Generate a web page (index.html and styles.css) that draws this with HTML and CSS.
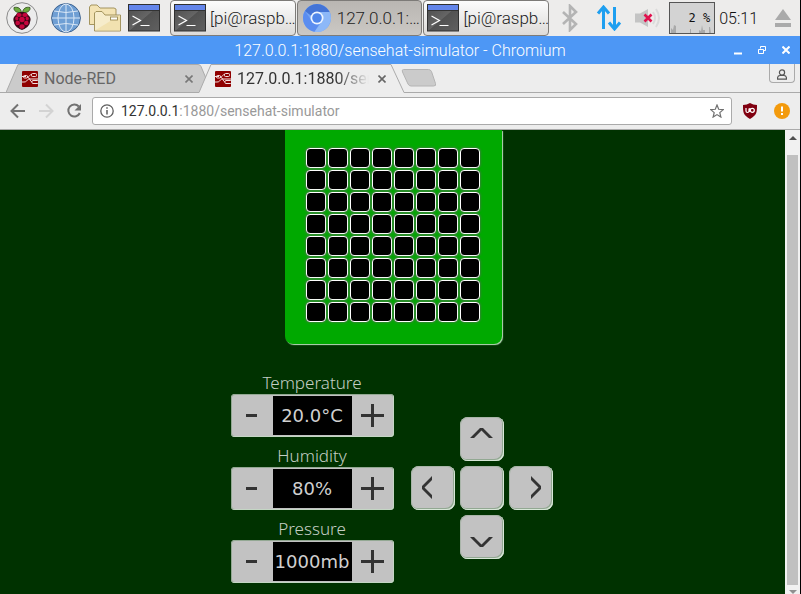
FILE: index.html
```html
<!DOCTYPE html>
<html lang="en">
<head>
<meta charset="utf-8">
<title>127.0.0.1:1880/sensehat-simulator</title>
<link rel="stylesheet" href="styles.css">
</head>
<body>
<svg class="defs" aria-hidden="true">
  <linearGradient id="term" x2="1" y2="1"><stop offset="0" stop-color="#4b4b4b"/><stop offset=".5" stop-color="#656565"/><stop offset=".52" stop-color="#525252"/><stop offset="1" stop-color="#606060"/></linearGradient>
  <symbol id="terminal" viewBox="0 0 32 28">
    <rect x=".5" y=".5" width="31" height="26.500" fill="url(#term)" stroke="#303030"/>
    <path d="M1 1h30v5H1z" fill="#6385ea"/><path d="M1 6.500h30" stroke="#333"/>
    <path d="M4.500 12l8 4.500-8 4.500M12.500 21.500h9" fill="none" stroke="#fff" stroke-width="1.200"/>
  </symbol>
  <symbol id="nodered" viewBox="0 0 16 16">
    <rect width="16" height="16" rx="1" fill="#8f0000"/>
    <g fill="none" stroke="#f3dede" stroke-width="1"><path d="M0 5.500h4M5 6c3 0 2-2.500 5-2.500M5 6c3 0 3 5 5 5M0 11h2c4 0 2-3 6-3h8"/><rect x="9.500" y="2.500" width="5" height="3" rx="1"/><rect x="10" y="9.500" width="6.500" height="3" rx="1"/><rect x="1.500" y="4.500" width="4" height="2.500" rx="1"/></g>
  </symbol>
</svg>

<header class="taskbar">
  <nav class="launchers">
    <button aria-label="Menu"><svg width="32" height="32" viewBox="0 0 32 32">
      <circle cx="16" cy="16" r="15.300" fill="#ececec" stroke="#8a8a8a"/>
      <g fill="#6cab3e" stroke="#2d4a1b" stroke-width=".8"><path d="M15.500 10.500C10 11 7.500 8.500 8 5.500c4-1 7 1 7.500 5z"/><path d="M16.500 10.500c5.500.5 8-2 7.500-5-4-1-7 1-7.500 5z"/></g>
      <path d="M16 10c4 0 5 1 6 3 3 2 3 5 2 7 0 4-5 7-8 8-3-1-8-4-8-8-1-2-1-5 2-7 1-2 2-3 6-3z" fill="#3a0715"/>
      <g fill="#c7053d"><ellipse cx="13" cy="13" rx="2.700" ry="2"/><ellipse cx="19" cy="13" rx="2.700" ry="2"/><circle cx="16" cy="17.500" r="2.700"/><ellipse cx="10.800" cy="16.500" rx="1.600" ry="2"/><ellipse cx="21.200" cy="16.500" rx="1.600" ry="2"/><circle cx="11.700" cy="21" r="2.300"/><circle cx="20.300" cy="21" r="2.300"/><ellipse cx="16" cy="24.500" rx="2.600" ry="2.300"/></g>
    </svg></button>
    <button aria-label="Web browser"><svg width="30" height="30" viewBox="0 0 30 30">
      <circle cx="15" cy="15" r="14.400" fill="#6f9fd4" stroke="#41648f"/>
      <g fill="none" stroke="#d9e7f6" stroke-width="1"><ellipse cx="15" cy="15" rx="8" ry="14"/><path d="M15 1v28M1 15h28M3 8q12 3 24 0M3 22q12-3 24 0"/></g>
    </svg></button>
    <button aria-label="File manager"><svg width="32" height="28" viewBox="0 0 32 28" stroke="#9b8b52" stroke-width=".9">
      <path d="M.5 20.500V3l1.500-2h6l3 3h14l2 1v15.500z" fill="#f3e3b4"/>
      <path d="M5.500 27V9L7 7.500h6l3 3.500h15.500v16z" fill="#f6eccb"/><path d="M6 26.500L31 11v15.500z" fill="#efdda4" stroke="none" opacity=".7"/>
      <rect x="21.500" y="13" width="7" height="3" fill="#fff"/>
    </svg></button>
    <button aria-label="Terminal"><svg width="32" height="28"><use href="#terminal"/></svg></button>
  </nav>
  <div class="tasks">
    <button class="task"><svg width="32" height="28"><use href="#terminal"/></svg><span>[pi@raspb…</span></button>
    <button class="task active"><svg width="32" height="30" viewBox="0 0 32 30">
      <circle cx="16" cy="15" r="14" fill="#72a3f3"/>
      <path d="M3.900 8A14 14 0 0 1 28.100 8L28.500 9H16a6 6 0 0 0-5.500 4z" fill="#4474d6"/>
      <path d="M3.900 8A14 14 0 0 0 13.500 28.800L19 20 10.800 18z" fill="#5b8df0"/>
      <path d="M28.500 9A14 14 0 0 1 13.500 28.800L21 18.500V12L18 9z" fill="#8db8f8"/>
      <circle cx="16" cy="15" r="6.500" fill="#eef5ff"/><circle cx="16" cy="15" r="4.800" fill="#4f86ea"/>
    </svg><span>127.0.0.1:…</span></button>
    <button class="task"><svg width="32" height="28"><use href="#terminal"/></svg><span>[pi@raspb…</span></button>
  </div>
  <div class="tray">
    <svg width="18" height="28" viewBox="0 0 18 28"><path d="M2 8l13 12-6 6V2l6 6L2 20" fill="none" stroke="#b4b4b4" stroke-width="2.600"/></svg>
    <svg width="26" height="26" viewBox="0 0 26 26"><path d="M7.500 24V4M2 8.500L7.500 2l5.500 6.500M18.500 2v20M13 17.500l5.500 6.500 5.500-6.500" fill="none" stroke="#1e9ff0" stroke-width="3"/></svg>
    <svg width="28" height="22" viewBox="0 0 28 22"><path d="M1 6.500h5L14 2v18l-8-4.500H1z" fill="#c4c4c4"/><path d="M19 5q4 6 0 12M22 2q6 9 0 18" fill="none" stroke="#dadada" stroke-width="2"/><path d="M10.500 7.500l7 7m0-7l-7 7" stroke="#e0114e" stroke-width="2.600"/></svg>
    <div class="cpu"><svg width="44" height="30" viewBox="0 0 44 30"><path d="M1 30v-5l2 2 1-5 2 1v7zM20 30v-4h1v4zM29 30v-3l2 1 1-6 1 5h2v3zM39 30v-6h1l1 6z" fill="#aaa"/></svg><span>2 %</span></div>
    <time>05:11</time>
    <button aria-label="Eject"><svg width="18" height="18" viewBox="0 0 18 18"><path d="M9 0l8 11H1zM1 14h16v4H1z" fill="#aaa"/></svg></button>
  </div>
</header>

<div class="titlebar">
  <h1>127.0.0.1:1880/sensehat-simulator - Chromium</h1>
  <div class="window-buttons">
    <button aria-label="Minimize"><svg width="8" height="10"><path d="M0 8.500h8" stroke="#fff" stroke-width="2"/></svg></button>
    <button aria-label="Restore"><svg width="8" height="8" fill="none" stroke="#fff"><path d="M2.500 2.500v-2h5v4h-2M.5 3.500h5v4h-5z"/></svg></button>
    <button aria-label="Close"><svg width="8" height="8"><path d="M.5.5l7 7m0-7l-7 7" stroke="#fff" stroke-width="2"/></svg></button>
  </div>
</div>

<div class="tabs">
  <div class="tab">
    <svg class="shape" viewBox="0 0 206 29" preserveAspectRatio="none"><path d="M0 28.500L12 .5h180q2 0 3 2l11 26z" fill="#cbcbcb" stroke="#aaa"/></svg>
    <svg class="favicon" width="16" height="16"><use href="#nodered"/></svg>
    <a href="#node-red">Node-RED</a>
    <button aria-label="Close tab"><svg width="8" height="8"><path d="M.5.5l7 7m0-7l-7 7" stroke="#777" stroke-width="1.600"/></svg></button>
  </div>
  <div class="tab current">
    <svg class="shape" viewBox="0 0 206 29" preserveAspectRatio="none"><path d="M0 28.500L12 .5h180l13 28V29H0z" fill="#ededed"/><path d="M0 28.500L12 .5h180l13 28" fill="none" stroke="#aaa"/></svg>
    <svg class="favicon" width="16" height="16"><use href="#nodered"/></svg>
    <a href="#simulator">127.0.0.1:1880/sensehat-simulator</a>
    <button aria-label="Close tab"><svg width="8" height="8"><path d="M.5.5l7 7m0-7l-7 7" stroke="#666" stroke-width="1.600"/></svg></button>
  </div>
  <button class="new-tab" aria-label="New tab"><svg width="36" height="18"><path d="M2.500.5h25q2 0 3 2l4 12q1 2.500-2 2.500H10q-2 0-3-2L1.500 3Q.5.5 2.500.5z" fill="#cbcbcb" stroke="#b4b4b4"/></svg></button>
  <button class="profile" aria-label="Profile"><svg width="10" height="11" fill="none" stroke="#555" stroke-width="1.200"><circle cx="5" cy="3.500" r="2.600"/><path d="M.6 10.200V8.500Q1 6.500 3 6.500h4q2 0 2.400 2v1.700z"/></svg></button>
</div>

<div class="toolbar">
  <button aria-label="Back"><svg width="16" height="16" viewBox="0 0 16 16"><path d="M15 8H2M8 1.500L1.500 8 8 14.500" fill="none" stroke="#727272" stroke-width="2"/></svg></button>
  <button aria-label="Forward"><svg width="16" height="16" viewBox="0 0 16 16"><path d="M1 8h13M8 1.500L14.500 8 8 14.500" fill="none" stroke="#d3d3d3" stroke-width="2"/></svg></button>
  <button aria-label="Reload"><svg width="16" height="16" viewBox="0 0 16 16"><path d="M12.800 3.500A6 6 0 1 0 13.800 10" fill="none" stroke="#727272" stroke-width="2"/><path d="M15 1v6.500H8.500z" fill="#727272"/></svg></button>
  <div class="address">
    <svg width="14" height="14" viewBox="0 0 14 14"><circle cx="7" cy="7" r="6.200" fill="none" stroke="#5f5f5f" stroke-width="1.300"/><path d="M7 6v4.500M7 3.200v1.600" stroke="#5f5f5f" stroke-width="1.500"/></svg>
    <a href="#simulator"><b>127.0.0.1</b>:1880/sensehat-simulator</a>
    <button aria-label="Bookmark"><svg width="14" height="14" viewBox="0 0 14 14"><path d="M7 1l1.700 4.300 4.600.3-3.500 3 1.100 4.500L7 10.600l-3.900 2.500 1.100-4.500-3.500-3 4.600-.3z" fill="none" stroke="#707070" stroke-width="1.200"/></svg></button>
  </div>
  <button aria-label="uBlock Origin"><svg width="16" height="16" viewBox="0 0 16 16"><path d="M8 0q3 2 7 2c0 7 0 10-7 14C1 12 1 9 1 2q4 0 7-2z" fill="#800010"/><path d="M4 5v3q0 1.500 1.500 1.500T7 8V5.500M8 5v4" fill="none" stroke="#fff" stroke-width="1.200"/><circle cx="10.300" cy="7.300" r="2" fill="none" stroke="#fff" stroke-width="1.200"/></svg></button>
  <button class="alert" aria-label="Update"><svg width="16" height="16"><circle cx="8" cy="8" r="8" fill="#f39a0c"/><path d="M8 3.500v5M8 10v2" stroke="#fff" stroke-width="2"/></svg></button>
</div>

<div class="viewport">
  <main>
    <div class="board"><div class="leds" id="leds"></div></div>
    <div class="controls">
      <div class="sensors">
        <section><h2>Temperature</h2><div class="stepper"><button aria-label="Decrease temperature"><i class="minus"></i></button><output>20.0°C</output><button aria-label="Increase temperature"><i class="plus"></i></button></div></section>
        <section><h2>Humidity</h2><div class="stepper"><button aria-label="Decrease humidity"><i class="minus"></i></button><output>80%</output><button aria-label="Increase humidity"><i class="plus"></i></button></div></section>
        <section><h2>Pressure</h2><div class="stepper"><button aria-label="Decrease pressure"><i class="minus"></i></button><output>1000mb</output><button aria-label="Increase pressure"><i class="plus"></i></button></div></section>
      </div>
      <div class="joystick">
        <button class="up" aria-label="Up"><svg width="24" height="12"><path d="M0 11L10 1h3l10 10h-4l-7.500-7.500L4 11z"/></svg></button>
        <button class="left" aria-label="Left"><svg width="12" height="24"><path d="M11 0L1 10v3l10 10v-4l-7.500-7.500L11 4z"/></svg></button>
        <button class="middle" aria-label="Press"></button>
        <button class="right" aria-label="Right"><svg width="12" height="24"><path d="M1 0l10 10v3L1 23v-4l7.500-7.500L1 4z"/></svg></button>
        <button class="down" aria-label="Down"><svg width="24" height="12"><path d="M0 1l10 10h3L23 1h-4l-7.500 7.500L4 1z"/></svg></button>
      </div>
    </div>
  </main>
  <div class="scrollbar"><i class="arrow-up"></i><div class="thumb"></div><i class="arrow-down"></i></div>
</div>
<script src="leds.js"></script>
</body>
</html>
```
FILE: styles.css
```css
* { box-sizing: border-box; }
body {
  margin: 0;
  height: 100vh;
  display: flex;
  flex-direction: column;
  overflow: hidden;
  border-right: 1px solid #000;
  background: #ededed;
  font-family: Roboto, sans-serif;
}
button { padding: 0; border: 0; background: none; font: inherit; color: inherit; }
svg { display: block; flex: none; }
a { color: inherit; text-decoration: none; }
h1, h2 { margin: 0; font-weight: 300; }
.defs { position: absolute; width: 0; height: 0; }

.taskbar { display: flex; align-items: center; height: 36px; flex: none; background: #edeceb; }
.launchers { display: flex; align-items: center; padding-left: 6px; }
.launchers button + button { margin-left: 7px; }
.launchers button:nth-child(2) { margin-left: 13px; }
.launchers button:nth-child(3) { margin-left: 8px; }
.tasks { display: flex; flex: 1; min-width: 0; gap: 1px; margin: 0 12px 0 10px; }
.task {
  flex: 1;
  min-width: 0;
  display: flex;
  align-items: center;
  gap: 4px;
  height: 36px;
  padding: 0 3px;
  overflow: hidden;
  border: 1px solid #7d7b78;
  border-radius: 4px;
  background: linear-gradient(#fcfcfc, #dddbd9);
  color: #222;
  font-size: 17px;
  font-weight: 300;
  white-space: nowrap;
}
.task.active { background: linear-gradient(#b9b6b2, #cbc8c4); }
.tray { display: flex; align-items: center; padding-right: 8px; }
.tray > svg:nth-child(2) { margin-left: 17px; }
.tray > svg:nth-child(3) { margin-left: 12px; }
.cpu {
  display: grid;
  margin: 0 4px 0 7px;
  border: 1px solid #555;
  background: #d3d3d3;
  color: #111;
  font-family: "DejaVu Sans Mono", monospace;
}
.cpu > * { grid-area: 1 / 1; }
.cpu span { align-self: center; justify-self: end; padding-right: 4px; font-size: 12px; }
.tray time { font-size: 16px; font-weight: 300; color: #111; }
.tray button { margin-left: 16px; }

.titlebar { display: flex; align-items: center; height: 28px; flex: none; background: #4d97f5; color: #fff; }
.titlebar h1 { flex: 1; padding-left: 66px; text-align: center; font-size: 16px; }
.window-buttons { display: flex; gap: 16px; padding-right: 10px; }

.tabs { display: flex; height: 29px; flex: none; padding-left: 6px; border-bottom: 1px solid #aaa; }
.tab { position: relative; display: flex; align-items: center; width: 206px; height: 29px; padding: 0 19px 0 16px; color: #666; font-size: 16px; }
.tab + .tab { margin-left: -13px; }
.shape { position: absolute; inset: 0; width: 100%; height: 29px; }
.favicon, .tab a, .tab button { position: relative; }
.tab a { flex: 1; margin: 0 9px 0 6px; overflow: hidden; white-space: nowrap; }
.current { color: #333; }
.current a { -webkit-mask-image: linear-gradient(to right, #000 75%, transparent); mask-image: linear-gradient(to right, #000 75%, transparent); }
.new-tab { margin-left: -4px; }
.profile {
  align-self: flex-start;
  display: flex;
  justify-content: center;
  width: 26px;
  height: 19px;
  margin: 0 5px 0 auto;
  padding-top: 5px;
  border: 1px solid #aaa;
  border-top: 0;
  border-radius: 0 0 4px 4px;
}

.toolbar { display: flex; align-items: center; height: 37px; flex: none; gap: 12px; padding: 0 10px; border-bottom: 1px solid #aaa; }
.address {
  flex: 1;
  display: flex;
  align-items: center;
  gap: 7px;
  height: 28px;
  margin: 0 -2px;
  padding: 0 7px;
  border: 1px solid #aaa;
  border-radius: 3px;
  background: #fff;
  color: #999;
  font-size: 14px;
}
.address a { flex: 1; }
.address b { color: #333; font-weight: 400; }
.alert { margin-left: 4px; }

.viewport { display: flex; flex: 1; min-height: 0; overflow: hidden; background: #003200; }
main { flex: 1; display: flex; flex-direction: column; align-items: center; }
.board {
  margin-left: 2px;
  padding: 18px 22px 22px 21px;
  border-radius: 0 0 8px 8px;
  background: #00a900;
  box-shadow: 1px 1px 1px #b8dcb8;
}
.leds { display: grid; grid-template-columns: repeat(8, 20px); gap: 2px; }
.leds i { height: 20px; border: 1px solid #fff; border-radius: 4px; background: #000; box-shadow: 0 0 2px 1px #338733; }
.controls { display: flex; align-items: center; gap: 17px; margin-top: 27px; padding-right: 2px; font-family: "DejaVu Sans", sans-serif; }
.sensors { display: grid; gap: 7px; }
.sensors h2 { height: 23px; text-align: center; color: #c4cec4; font-family: "Noto Sans", sans-serif; font-size: 17px; font-weight: 300; line-height: 23px; }
.stepper {
  display: grid;
  grid-template-columns: 42px 79px 42px;
  height: 43px;
  overflow: hidden;
  border-radius: 4px;
  background: #c2c2c2;
  box-shadow: inset -1px -1px 0 #c4d6c4, inset 0 0 0 1px #93a893;
}
.stepper button { display: grid; place-items: center; }
.stepper output { display: grid; place-items: center; margin: 2px 0; background: #000; color: #d0d0d0; font-size: 18px; }
.minus { width: 11px; height: 3px; background: #333; }
.plus { width: 23px; height: 23px; background: linear-gradient(#333, #333) center / 23px 3px no-repeat, linear-gradient(#333, #333) center / 3px 23px no-repeat; }
.joystick {
  display: grid;
  grid-template: repeat(3, 44px) / repeat(3, 44px);
  gap: 5px;
  margin-top: 21px;
}
.joystick button { display: grid; place-items: center; border-radius: 8px; background: #c2c2c2; box-shadow: inset -1px -1px 0 #d7e6d7, inset -2px -2px 0 #92a892, inset 0 0 0 1px #a9b5a9; }
.joystick svg { fill: #333; }
.joystick .up { grid-area: 1 / 2; padding-bottom: 12px; }
.joystick .left { grid-area: 2 / 1; padding-right: 12px; }
.joystick .middle { grid-area: 2 / 2; }
.joystick .right { grid-area: 2 / 3; padding-left: 10px; }
.joystick .down { grid-area: 3 / 2; padding-top: 10px; }

.scrollbar { display: flex; flex-direction: column; align-items: center; width: 15px; padding-top: 6px; background: #f1f1f1; }
.thumb { flex: 1; width: 11px; margin: 15px 0 5px; background: #c0c0c0; }
.arrow-up, .arrow-down { border: 4px solid transparent; }
.arrow-up { border-top: 0; border-bottom-color: #505050; }
.arrow-down { border-bottom: 0; border-top-color: #909090; }
```
FILE: leds.js
```javascript
const matrix = document.getElementById("leds");
for (let n = 0; n < 64; n++) matrix.append(document.createElement("i"));
```
